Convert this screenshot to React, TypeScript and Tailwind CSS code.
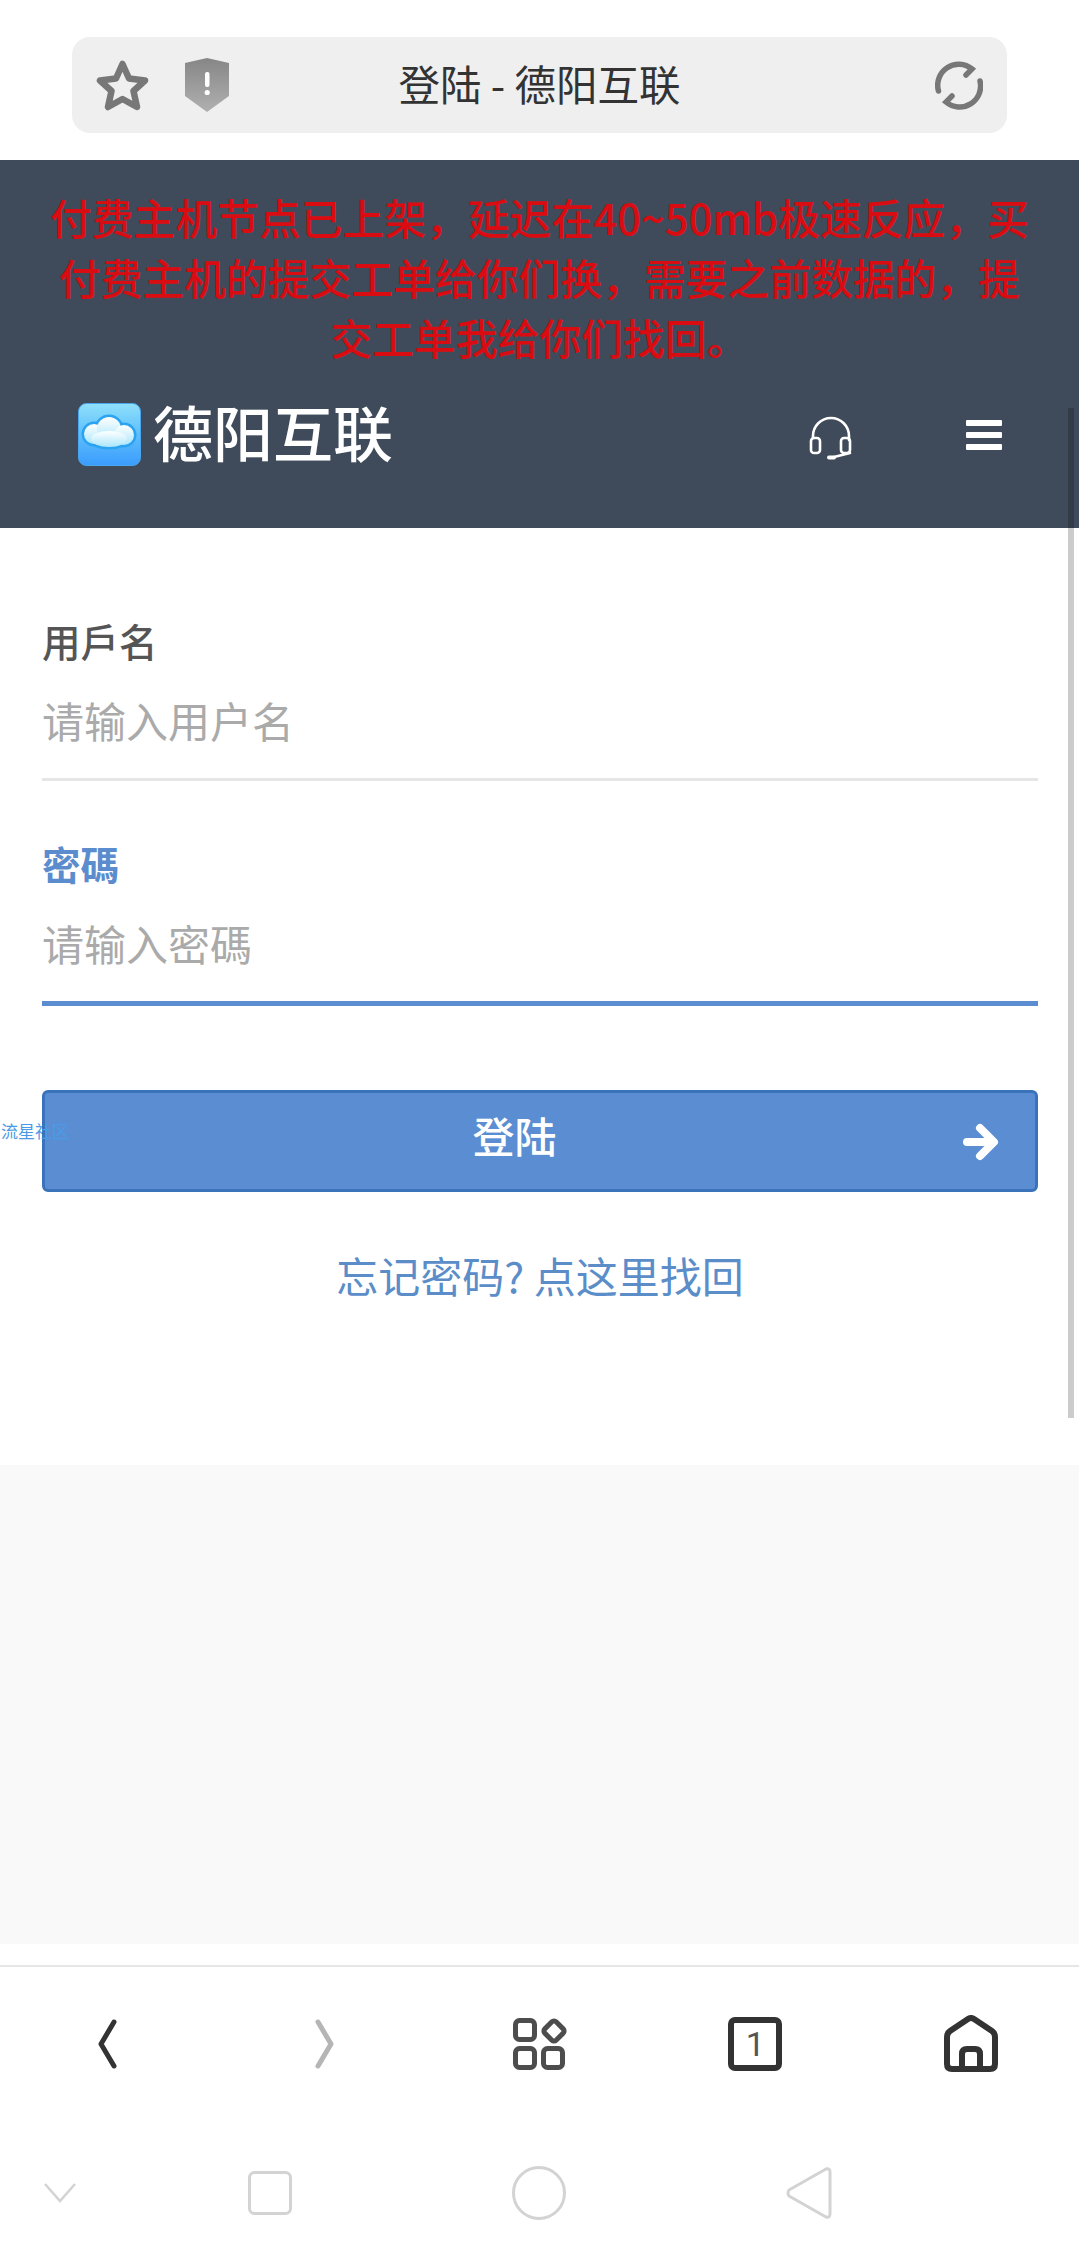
import React from "react";

const BackIcon = ({ color }: { color: string }) => (
	<svg width="20" height="50" viewBox="0 0 20 50" fill="none" stroke={color} strokeWidth="5" strokeLinecap="round" strokeLinejoin="round">
		<polyline points="16,3 3,25 16,47" />
	</svg>
);

const Logo = () => (
	<svg width="63" height="63" viewBox="0 0 63 63">
		<defs>
			<linearGradient id="logoBg" x1="0" y1="0" x2="0" y2="1">
				<stop offset="0" stopColor="#8fe0fb" />
				<stop offset="0.45" stopColor="#62c2fb" />
				<stop offset="1" stopColor="#3a9cfd" />
			</linearGradient>
			<linearGradient id="logoCloud" x1="0" y1="0" x2="0" y2="1">
				<stop offset="0" stopColor="#ffffff" />
				<stop offset="1" stopColor="#a9e6fb" />
			</linearGradient>
		</defs>
		<rect x="0.5" y="0.5" width="62" height="62" rx="8" fill="url(#logoBg)" stroke="#4aa6ee" />
		{/* cloud lobes: outline first, fill over it */}
		<g fill="#2ba3f0" stroke="#2ba3f0" strokeWidth="5">
			<ellipse cx="16" cy="31" rx="10" ry="10" />
			<ellipse cx="31" cy="26" rx="12" ry="12" />
			<ellipse cx="46" cy="32" rx="10" ry="10" />
			<ellipse cx="31" cy="36" rx="18" ry="8" />
		</g>
		<g fill="url(#logoCloud)">
			<ellipse cx="16" cy="31" rx="10" ry="10" />
			<ellipse cx="31" cy="26" rx="12" ry="12" />
			<ellipse cx="46" cy="32" rx="10" ry="10" />
			<ellipse cx="31" cy="36" rx="18" ry="8" />
		</g>
	</svg>
);

const App = () => {
	return (
		<div className="relative w-[1079px] h-[2265px] overflow-hidden bg-white font-['Noto_Sans_CJK_SC','Noto_Sans',sans-serif]">
			{/* browser address bar */}
			<div className="h-[160px] px-[72px] pt-[37px] bg-white">
				<div className="h-[96px] rounded-[18px] bg-[#efefef] grid grid-cols-[1fr_auto_1fr] items-center px-6">
					<div className="flex items-center gap-[36px]">
						<svg width="53" height="51" viewBox="0 0 53 51" fill="none" stroke="#777777" strokeWidth="6.5" strokeLinejoin="round">
							<polygon points="26.5,4 33,18.5 49,20.5 37.5,31 41,47 26.5,39 12,47 15.5,31 4,20.5 20,18.5" />
						</svg>
						<svg width="44" height="54" viewBox="0 0 44 54">
							<defs>
								<linearGradient id="shield" x1="0" y1="0" x2="0" y2="1">
									<stop offset="0" stopColor="#868686" />
									<stop offset="1" stopColor="#b0b0b0" />
								</linearGradient>
							</defs>
							<path d="M22 0 L44 5 V38 L22 54 L0 38 V5 Z" fill="url(#shield)" />
							<rect x="20" y="14" width="4.5" height="15" rx="2" fill="#ffffff" />
							<circle cx="22.2" cy="34.5" r="2.6" fill="#ffffff" />
						</svg>
					</div>
					<div className="text-[41.5px] leading-[60px] text-[#333333] -mt-[5px]">登陆 - 德阳互联</div>
					<div className="flex justify-end">
						<svg width="48" height="49" viewBox="0 0 48 49" fill="none" stroke="#777777" strokeWidth="5.5" strokeLinecap="round">
							<path d="M3.5 30 A21 21 0 0 1 37 8 L31 14" />
							<path d="M45 20 A21 21 0 0 1 11 41 L17 35" />
						</svg>
					</div>
				</div>
			</div>

			{/* site header */}
			<div className="h-[368px] bg-[#3f4b5b] pt-[27px]">
				<div className="px-[40px] text-center text-[41.8px] leading-[60px] font-medium text-[#d90c12]">
					付费主机节点已上架，延迟在40~50mb极速反应，买付费主机的提交工单给你们换，需要之前数据的，提交工单我给你们找回。
				</div>
				<div className="flex items-center h-[63px] mt-[36px] pl-[78px] pr-[77px]">
					<Logo />
					<div className="ml-[12px] text-[60px] leading-[63px] font-medium text-white -mt-[9px]">德阳互联</div>
					<svg className="ml-auto mt-[7px]" width="44" height="44" viewBox="0 0 44 44" fill="none" stroke="#ffffff" strokeWidth="2.6" strokeLinecap="round">
						<path d="M4 22 V20 A18 18 0 0 1 40 20 V24" />
						<rect x="2" y="22" width="9" height="15" rx="3" />
						<rect x="32" y="22" width="9" height="15" rx="3" />
						<path d="M41 37 L25 41" />
						<path d="M20 41.5 H25" strokeWidth="4" />
					</svg>
					<div className="ml-[113px] w-[36px] flex flex-col gap-[6px]">
						<div className="h-[6px] rounded-[1px] bg-white" />
						<div className="h-[6px] rounded-[1px] bg-white" />
						<div className="h-[6px] rounded-[1px] bg-white" />
					</div>
				</div>
			</div>

			{/* login form */}
			<div className="relative h-[937px] bg-white pl-[42px] pr-[41px] pt-[87px]">
				<div className="text-[38.5px] leading-[50px] font-medium text-[#555555]">用戶名</div>
				<div className="h-[116px] border-b-[3px] border-[#e6e6e6] pt-[27px] text-[42px] leading-[56px] text-[#aaaaaa]">请输入用户名</div>

				<div className="mt-[57px] text-[38.5px] leading-[50px] font-bold text-[#5a8cce]">密碼</div>
				<div className="h-[118px] border-b-[5px] border-[#5b8dd0] pt-[27px] text-[42px] leading-[56px] text-[#aaaaaa]">请输入密碼</div>

				<div className="mt-[84px] h-[102px] rounded-[6px] border-[3px] border-[#3a73b9] bg-[#5b8dd2] flex items-center pr-[36px] text-white">
					<div className="flex-1 text-center text-[42px] leading-[56px] font-medium pl-[21px] -mt-[12px]">登陆</div>
					<svg className="mt-[2px]" width="36" height="38" viewBox="0 0 36 38" fill="none" stroke="#ffffff" strokeWidth="8" strokeLinecap="round" strokeLinejoin="round">
						<path d="M4 19 H30" />
						<path d="M17 5 L31 19 L17 33" />
					</svg>
				</div>
				<div className="mt-[53px] text-center text-[42px] leading-[60px] text-[#5b8dc9]">忘记密码? 点这里找回</div>

				<span className="absolute left-[1px] top-[593px] text-[17px] leading-[20px] whitespace-nowrap text-[#4a9be6]">流星社区</span>
			</div>

			{/* empty footer area */}
			<div className="h-[479px] bg-[#f9f9f9]" />

			{/* browser toolbar */}
			<div className="h-[21px] bg-white" />
			<div className="h-[155px] border-t-2 border-[#e6e6e6] bg-white grid grid-cols-5 items-center justify-items-center">
				<BackIcon color="#333333" />
				<div className="rotate-180">
					<BackIcon color="#b5b5b5" />
				</div>
				<svg className="ml-[2px]" width="56" height="54" viewBox="0 0 56 54" fill="none" stroke="#4d4d4d" strokeWidth="5">
					<rect x="3.5" y="3.5" width="19" height="19" rx="4" />
					<rect x="3.5" y="31.5" width="19" height="19" rx="4" />
					<rect x="31.5" y="31.5" width="19" height="19" rx="4" />
					<rect x="34" y="6" width="16" height="16" rx="3" transform="rotate(45 42 14)" />
				</svg>
				<div className="w-[54px] h-[54px] rounded-[7px] border-[6px] border-[#333333] flex items-center justify-center text-[34px] leading-none font-['Roboto',sans-serif] text-[#555555]">1</div>
				<svg width="54" height="57" viewBox="0 0 54 57" fill="none" stroke="#333333" strokeWidth="6" strokeLinejoin="round">
					<path d="M3 22 Q3 18 6 16 L24 4 Q27 2 30 4 L48 16 Q51 18 51 22 V49 Q51 54 46 54 H8 Q3 54 3 49 Z" />
					<path d="M18 54 V39 Q18 34 23 34 H31 Q36 34 36 39 V54" />
				</svg>
			</div>

			{/* android navigation bar */}
			<div className="flex items-center h-[145px] pl-[44px] bg-white">
				<svg width="32" height="20" viewBox="0 0 32 20" fill="none" stroke="#d3d3d3" strokeWidth="2.5">
					<path d="M1 1 L16 18 L31 1" />
				</svg>
				<svg className="ml-[172px]" width="44" height="44" viewBox="0 0 44 44" fill="none" stroke="#d3d3d3" strokeWidth="3">
					<rect x="1.5" y="1.5" width="41" height="41" rx="5" />
				</svg>
				<svg className="ml-[220px]" width="54" height="54" viewBox="0 0 54 54" fill="none" stroke="#d3d3d3" strokeWidth="3">
					<circle cx="27" cy="27" r="25.5" />
				</svg>
				<svg className="ml-[220px]" width="46" height="52" viewBox="0 0 46 52" fill="none" stroke="#d3d3d3" strokeWidth="3" strokeLinejoin="round">
					<path d="M40 2 Q44 1 44 5 V47 Q44 51 40 50 L3 29 Q1 26 3 23 Z" />
				</svg>
			</div>

			{/* overlay scrollbar */}
			<div className="absolute left-[1068px] top-[408px] w-[6px] h-[1010px] bg-black/20" />
		</div>
	);
};

export default App;
